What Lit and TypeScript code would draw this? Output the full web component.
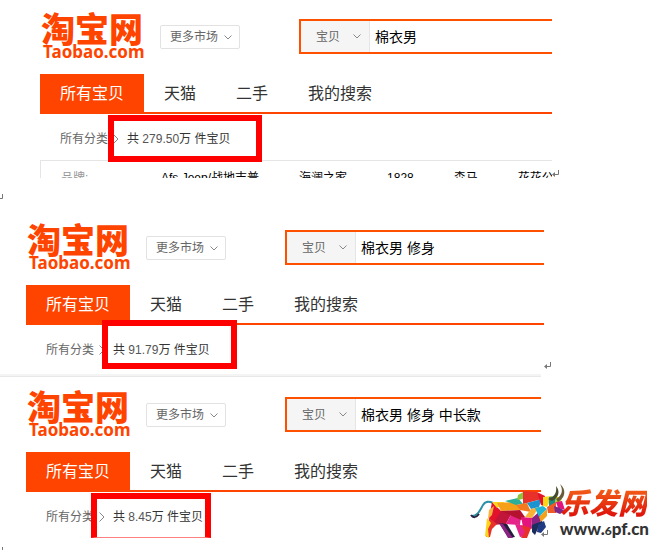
import { LitElement, html, css, svg, nothing } from "lit";
import { customElement, property } from "lit/decorators.js";

const chevron = html`<svg class="chevron" width="8" height="5" viewBox="0 0 8 5" aria-hidden="true">
  <path d="M.5 .5 4 4 7.5 .5" fill="none" stroke="#888" />
</svg>`;

const returnMark = html`<svg class="return" width="8" height="8" viewBox="0 0 8 8" aria-hidden="true">
  <path d="M6.500 0v4.500H1" fill="none" stroke="#777" />
  <path d="M0 4.500 3 2v5z" fill="#777" />
</svg>`;

@customElement("result-panel")
export class ResultPanel extends LitElement {
  @property() query = "";
  @property() count = "";
  @property({ type: Array }) brands: string[] = [];

  static styles = css`
    :host {
      display: block;
      overflow: hidden;
      font: 12px/16px "Liberation Sans", "Noto Sans CJK SC", sans-serif;
      color: #333;
    }
    .head {
      display: flex;
      align-items: flex-start;
      height: 60px;
      padding-top: 14px;
    }
    .logo {
      width: 120px;
      flex: none;
      color: #ff4400;
      text-decoration: none;
      white-space: nowrap;
    }
    .cn {
      display: block;
      font: 900 34px/28px "Noto Sans CJK SC", sans-serif;
      padding-left: 1px;
    }
    .en {
      display: block;
      font: 700 17px/20px "Noto Sans", sans-serif;
      padding-left: 3px;
    }
    .market {
      display: flex;
      align-items: center;
      justify-content: space-between;
      flex: none;
      box-sizing: border-box;
      width: 80px;
      height: 24px;
      margin-top: 11px;
      padding: 0 7px 0 9px;
      border: 1px solid #e2e2e2;
      border-radius: 2px;
      background: #fff;
      font: inherit;
      color: #666;
    }
    .search {
      display: flex;
      flex: 1;
      min-width: 0;
      box-sizing: border-box;
      height: 35px;
      margin: 5px 0 0 59px;
      border: 2px solid #ff5000;
      border-right: 0;
    }
    .kind {
      position: relative;
      flex: none;
      display: flex;
      align-items: center;
      width: 68px;
      background: #f5f5f5;
      border-right: 1px solid #e5e5e5;
    }
    .kind .chevron {
      position: absolute;
      right: 8px;
      pointer-events: none;
    }
    select {
      appearance: none;
      width: 100%;
      height: 100%;
      padding: 0 0 0 15px;
      border: 0;
      background: none;
      font: inherit;
      color: #666;
    }
    input {
      flex: 1;
      min-width: 0;
      padding: 0 0 0 5px;
      border: 0;
      outline: 0;
      background: none;
      font: 14px/20px "Liberation Sans", "Noto Sans CJK SC", sans-serif;
      color: #000;
    }
    .tabs {
      display: flex;
      box-sizing: border-box;
      height: 40px;
      border-bottom: 2px solid #ff4400;
      font-size: 16px;
      line-height: 40px;
    }
    .tabs a {
      padding: 0 20px;
      color: #333;
      text-decoration: none;
      white-space: nowrap;
    }
    .tabs .on {
      height: 40px;
      background: #ff4400;
      color: #fff;
    }
    .crumbs {
      display: flex;
      align-items: center;
      box-sizing: border-box;
      height: 46px;
      padding: 3px 20px 0;
      white-space: nowrap;
    }
    .crumbs a {
      color: #666;
      text-decoration: none;
    }
    .crumbs svg {
      margin: 0 8px 0 5px;
    }
    .count {
      color: #555;
    }
    .filter {
      display: flex;
      margin: 0;
      border: 1px solid #e5e5e5;
      border-width: 1px 0 0 1px;
      padding: 9px 0 0 20px;
      white-space: nowrap;
    }
    .filter dt {
      width: 100px;
      flex: none;
      color: #999;
    }
    .filter dd {
      margin: 0 40px 0 0;
      color: #000;
    }
  `;

  render() {
    return html`
      <div class="head">
        <a class="logo" href="#"><span class="cn">淘宝网</span><span class="en">Taobao.com</span></a>
        <button class="market" type="button">更多市场 ${chevron}</button>
        <form class="search">
          <div class="kind">
            <select aria-label="搜索类型"><option>宝贝</option></select>${chevron}
          </div>
          <input type="text" aria-label="搜索" .value=${this.query} />
        </form>
      </div>
      <nav class="tabs">
        <a class="on" href="#">所有宝贝</a><a href="#">天猫</a><a href="#">二手</a><a href="#">我的搜索</a>
      </nav>
      <div class="crumbs">
        <a href="#">所有分类</a>
        <svg width="6" height="10" viewBox="0 0 6 10" aria-hidden="true">
          <path d="M.5 .5 5 5 .5 9.500" fill="none" stroke="#888" />
        </svg>
        <span>共 <span class="count">${this.count}</span>万 件宝贝</span>
      </div>
      ${this.brands.length
        ? html`<dl class="filter"><dt>品牌:</dt>${this.brands.map((b) => html`<dd>${b}</dd>`)}</dl>`
        : nothing}
    `;
  }
}

const facets: [string, string][] = [
  ["#e3132c", "27,27 36,36 37,45 27,50 24,43"],
  ["#ffd21f", "27,27 40,27 32,33"],
  ["#f6a01a", "32,28 51,27 55,35 36,36"],
  ["#fbb040", "24,35 29,31 27,40 23,44"],
  ["#c2153a", "36,36 48,36 41,49 27,50"],
  ["#e6258a", "48,36 56,42 55,50 41,49"],
  ["#b5122f", "36,36 55,35 60,42 56,45"],
  ["#2cae9b", "40,26 53,23 58,29 51,30"],
  ["#8cc63f", "53,20 60,16 58,24 52,25"],
  ["#e9312c", "58,16 72,17 77,24 58,29"],
  ["#f47a20", "51,30 62,28 66,37 55,35"],
  ["#1d93d1", "62,28 77,24 74,32 66,34"],
  ["#f9b233", "66,34 74,32 67,43 60,42"],
  ["#e5147c", "56,42 67,43 66,54 58,52"],
  ["#8b2382", "67,43 75,36 76,46 66,54"],
  ["#22b5d6", "70,33 78,31 82,34 74,42"],
  ["#e3132c", "72,17 80,21 79,31 76,30"],
  ["#f6a01a", "74,42 82,34 82,41 76,47"],
  ["#fbd51c", "78,22 87,21 82,32 78,31"],
  ["#1a8f86", "84,22 92,21 91,28 84,33"],
  ["#f05a28", "82,32 91,27 91,38 83,38"],
  ["#c3d52f", "91,21 97,24 94,29 90,27"],
  ["#e5147c", "91,27 97,26 100,35 93,33"],
  ["#7b2a8b", "89,31 95,33 100,36 95,39 90,37"],
  ["#e9312c", "24,43 32,49 27,54 25,62 21,62 23,52"],
  ["#fbd51c", "22,43 26,48 23,54 24,63 20,61"],
  ["#241d3c", "34,48 42,49 50,62 44,63"],
  ["#8b2382", "34,48 38,49 48,63 43,63"],
  ["#e6258a", "50,49 60,51 62,61 55,62"],
  ["#e9312c", "56,50 66,53 62,63 56,63 60,57"],
  ["#1c2c5b", "67,50 77,46 80,51 74,51 70,60 67,57"],
  ["#203a83", "73,50 79,46 81,52 76,58 72,57"],
];

const bull = svg`
  <path d="M28 28C24 26 20 26 18 30C15 35 13 41 7 41" fill="none" stroke="#2b8fa5" stroke-width="2" />
  <path d="M14 39C11 43 8 43 6 40" fill="none" stroke="#25233d" stroke-width="2" />
  ${facets.map(([fill, points]) => svg`<polygon fill=${fill} points=${points} />`)}
  <path d="M83 24C90 22 92 17 91 11C96 17 93 23 87 26z" fill="#4a4a2c" />
  <path d="M91 24C98 20 98 14 95 9C102 15 100 23 93 27z" fill="#6b5a3a" />
`;

@customElement("app-root")
export class AppRoot extends LitElement {
  static styles = css`
    :host {
      display: block;
      position: relative;
      min-height: 550px;
      overflow: hidden;
      background: #fff;
      font-family: "Liberation Sans", "Noto Sans CJK SC", sans-serif;
    }
    .row {
      display: flex;
      align-items: flex-end;
      position: relative;
    }
    .row result-panel {
      flex: 1;
      min-width: 0;
    }
    .first {
      padding: 0 107px 0 40px;
      margin-bottom: 33px;
    }
    .first result-panel {
      height: 178px;
    }
    .second {
      padding: 0 115px 0 26px;
      margin-bottom: 4px;
    }
    .second result-panel {
      height: 159px;
    }
    .third {
      padding: 0 118px 0 26px;
    }
    .third result-panel {
      height: 160px;
    }
    .return {
      flex: none;
      margin-right: -8px;
      position: relative;
      z-index: 2;
    }
    .third .return {
      position: relative;
    }
    hr {
      margin: 0 118px 1px 0;
      height: 2px;
      border: 0;
      border-bottom: 1px solid #e8e8e8;
      background: #f4f4f4;
    }
    .mark {
      position: absolute;
      box-sizing: border-box;
      border: 6px solid #ff0000;
    }
    .m1 {
      left: 108px;
      top: 115px;
      width: 154px;
      height: 47px;
    }
    .m2 {
      left: 102px;
      top: 109px;
      width: 135px;
      height: 49px;
    }
    .m3 {
      left: 91px;
      top: 115px;
      width: 120px;
      height: 45px;
      border-bottom: 1px solid #ff8080;
    }
    .edge {
      position: absolute;
      left: 0;
      top: 194px;
    }
    .edge.low {
      top: 547px;
    }
    .site {
      position: absolute;
      right: 8px;
      top: 475px;
      color: #333;
      text-decoration: none;
    }
    .site svg {
      display: block;
    }
    .site .name {
      position: absolute;
      right: 4px;
      top: 8px;
      font: italic 900 29px/36px "Noto Sans CJK SC", sans-serif;
      background: linear-gradient(#f7701a, #dc0a0a);
      background-clip: text;
      color: transparent;
      white-space: nowrap;
    }
    .site .url {
      position: absolute;
      right: 2px;
      top: 44px;
      font: 900 17px/20px "Lato", sans-serif;
      white-space: nowrap;
    }
    .site small {
      font-size: 12px;
    }
  `;

  render() {
    return html`
      <section class="row first">
        <result-panel
          query="棉衣男"
          count="279.50"
          .brands=${["Afs Jeep/战地吉普", "海澜之家", "1828", "森马", "花花公子"]}
        ></result-panel>
        ${returnMark}
        <div class="mark m1"></div>
      </section>
      <section class="row second">
        <result-panel query="棉衣男 修身" count="91.79"></result-panel>
        ${returnMark}
        <div class="mark m2"></div>
      </section>
      <hr />
      <section class="row third">
        <result-panel query="棉衣男 修身 中长款" count="8.45"></result-panel>
        ${returnMark}
        <div class="mark m3"></div>
      </section>
      <svg class="edge" width="3" height="6" viewBox="0 0 3 6" aria-hidden="true">
        <path d="M2.500 0v4.500H0" fill="none" stroke="#777" />
      </svg>
      <svg class="edge low" width="3" height="3" viewBox="0 0 3 3" aria-hidden="true">
        <path d="M2.500 0v3" fill="none" stroke="#777" />
      </svg>
      <a class="site" href="#">
        <svg width="186" height="75" viewBox="0 0 186 75" aria-hidden="true">${bull}</svg>
        <span class="name">乐发网</span>
        <span class="url">www.<small>6</small>pf.cn</span>
      </a>
    `;
  }
}
